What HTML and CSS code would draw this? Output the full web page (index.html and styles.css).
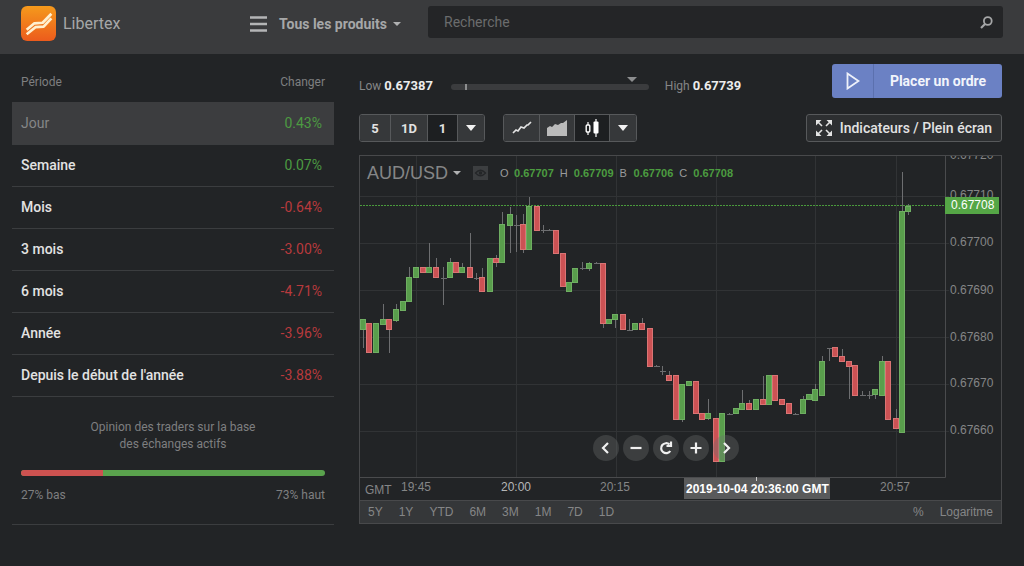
FILE: index.html
```html
<!DOCTYPE html>
<html lang="fr">
<head>
<meta charset="utf-8">
<meta name="viewport" content="width=device-width, initial-scale=1">
<title>Libertex</title>
<link rel="stylesheet" href="styles.css">
</head>
<body>
<header class="topbar">
  <a class="brand" href="#">
    <svg class="brand-logo" viewBox="0 0 34 34" aria-hidden="true">
      <defs><linearGradient id="lg" x1="0" y1="0" x2="0" y2="1"><stop offset="0" stop-color="#f59a1c"/><stop offset="1" stop-color="#ec5b1c"/></linearGradient></defs>
      <rect width="34" height="34" rx="6" fill="url(#lg)"/>
      <path d="M5.500 23 L13 16.800 L21 16.300 L29.500 7.500" fill="none" stroke="#fff0cf" stroke-width="2.600" stroke-linejoin="round"/>
      <path d="M5.500 27.500 L14 20.600 L22 20 L29.500 12" fill="none" stroke="#fff0cf" stroke-width="2.600" stroke-linejoin="round"/>
    </svg>
    <span>Libertex</span>
  </a>
  <button class="products" type="button">
    <svg class="burger" viewBox="0 0 17 16" aria-hidden="true"><path d="M0 1.500h17M0 8h17M0 14.500h17" stroke="#b4b5b6" stroke-width="2.400"/></svg>
    <span>Tous les produits</span>
    <span class="caret caret-small"></span>
  </button>
  <form class="search">
    <input class="search-input" type="search" placeholder="Recherche" aria-label="Recherche">
    <button class="search-button" type="button" aria-label="Rechercher">
      <svg viewBox="0 0 13 13" aria-hidden="true"><circle cx="7.800" cy="5" r="3.900" fill="none" stroke="#a5a6a7" stroke-width="1.800"/><path d="M5 8 1 12" stroke="#a5a6a7" stroke-width="2.200"/></svg>
    </button>
  </form>
</header>

<main class="layout">
  <section class="stats">
    <table class="periods">
      <thead><tr><th scope="col">Période</th><th scope="col">Changer</th></tr></thead>
      <tbody>
        <tr class="selected"><th scope="row">Jour</th><td class="up">0.43%</td></tr>
        <tr><th scope="row">Semaine</th><td class="up">0.07%</td></tr>
        <tr><th scope="row">Mois</th><td class="down">-0.64%</td></tr>
        <tr><th scope="row">3 mois</th><td class="down">-3.00%</td></tr>
        <tr><th scope="row">6 mois</th><td class="down">-4.71%</td></tr>
        <tr><th scope="row">Année</th><td class="down">-3.96%</td></tr>
        <tr><th scope="row">Depuis le début de l'année</th><td class="down">-3.88%</td></tr>
      </tbody>
    </table>
    <div class="opinion">
      <p class="opinion-title">Opinion des traders sur la base<br>des échanges actifs</p>
      <div class="opinion-bar"><div class="opinion-low" style="width:27%"></div></div>
      <div class="opinion-labels"><span>27% bas</span><span>73% haut</span></div>
    </div>
  </section>

  <section class="trading">
    <div class="order-row">
      <div class="extent">
        <span class="extent-label">Low <b>0.67387</b></span>
        <div class="extent-track"><i class="extent-open"></i><i class="extent-now caret"></i></div>
        <span class="extent-label">High <b>0.67739</b></span>
      </div>
      <button class="order" type="button">
        <span class="order-icon"><svg viewBox="0 0 14 18" aria-hidden="true"><path d="M1.500 1.500v15L12.500 9z" fill="none" stroke="#eef1fa" stroke-width="1.800"/></svg></span>
        <span class="order-text">Placer un ordre</span>
      </button>
    </div>

    <div class="tools">
      <div class="group">
        <button type="button" class="tool w-s">5</button>
        <button type="button" class="tool w-l">1D</button>
        <button type="button" class="tool w-s active">1</button>
        <button type="button" class="tool w-xs" aria-label="Intervalles"><span class="caret"></span></button>
      </div>
      <div class="group">
        <button type="button" class="tool w-m" aria-label="Ligne"><svg class="icon-line" viewBox="0 0 20 16" aria-hidden="true"><path d="M1 13l3-3 2 1 3-4 3 1 3-3 1 0 3-3" fill="none" stroke="#e2e2e2" stroke-width="1.700"/></svg></button>
        <button type="button" class="tool w-m" aria-label="Aire"><svg class="icon-line" viewBox="0 0 20 16" aria-hidden="true"><path d="M0 16V8l3-2 2 1 3-3 3 1 3-2 2 0 4-3V16z" fill="#bbb"/></svg></button>
        <button type="button" class="tool w-m active" aria-label="Chandeliers"><svg class="icon-candle" viewBox="0 0 14 18" aria-hidden="true"><path d="M3 3v3M3 13v3M11 0v18" stroke="#fff" stroke-width="1.200"/><rect x="1.200" y="6" width="3.600" height="7" rx="1" fill="none" stroke="#fff" stroke-width="1.400"/><rect x="8.500" y="2.500" width="5" height="12" rx="1" fill="#fff"/></svg></button>
        <button type="button" class="tool w-xs" aria-label="Types de graphique"><span class="caret"></span></button>
      </div>
      <button type="button" class="fullscreen">
        <svg viewBox="0 0 16 16" aria-hidden="true"><g fill="#e4e4e4" stroke="#e4e4e4" stroke-width="1.600"><path stroke="none" d="M0 0h5.500L0 5.500zM16 0v5.500L10.500 0zM0 16v-5.500L5.500 16zM16 16h-5.500L16 10.500z"/><path d="M2 2l4 4M14 2l-4 4M2 14l4-4M14 14l-4-4"/></g></svg>
        <span>Indicateurs / Plein écran</span>
      </button>
    </div>

    <div class="chart">
      <div class="plot">
        <svg id="plot" class="plot-svg" viewBox="360 156 641 344" role="img" aria-label="AUD/USD">
          <g id="grid" class="grid"></g>
          <path class="frame" d="M360 477.500H945.500V156"/>
          <g id="candles"></g>
          <path class="last" d="M360 205.500H945"/>
          <g class="axis">
            <text x="950" y="159">0.67720</text>
            <text x="950" y="199">0.67710</text>
            <text x="950" y="246">0.67700</text>
            <text x="950" y="294">0.67690</text>
            <text x="950" y="341">0.67680</text>
            <text x="950" y="387">0.67670</text>
            <text x="950" y="434">0.67660</text>
            <text x="365" y="494">GMT</text>
            <text x="401" y="491">19:45</text>
            <text x="501" y="491" class="strong">20:00</text>
            <text x="600" y="491">20:15</text>
            <text x="880" y="491">20:57</text>
          </g>
          <rect x="945" y="197" width="54" height="17" fill="#55a646"/>
          <text class="tag" x="951" y="209">0.67708</text>
          <rect x="684" y="478" width="146" height="21" fill="#595a5b"/>
          <path d="M756.500 477v4" stroke="#ccc"/>
          <text class="tag tag-time" x="686" y="493">2019-10-04 20:36:00 GMT</text>
        </svg>
        <div class="legend">
          <button type="button" class="symbol">AUD/USD <span class="caret caret-small"></span></button>
          <svg class="eye" viewBox="0 0 15 14" aria-hidden="true"><rect width="15" height="14" fill="#3c3e40"/><path d="M2.500 7Q7.500 1.500 12.500 7Q7.500 12.500 2.500 7z" fill="none" stroke="#242628" stroke-width="1.300"/><circle cx="7.500" cy="7" r="1.800" fill="#242628"/></svg>
          <dl class="ohlc">
            <div><dt>O</dt><dd>0.67707</dd></div>
            <div><dt>H</dt><dd>0.67709</dd></div>
            <div><dt>B</dt><dd>0.67706</dd></div>
            <div><dt>C</dt><dd>0.67708</dd></div>
          </dl>
        </div>
        <div class="nav">
          <button type="button" aria-label="Reculer"><svg viewBox="0 0 16 16"><path d="M10 3 5 8l5 5"/></svg></button>
          <button type="button" aria-label="Dézoomer"><svg viewBox="0 0 16 16"><path d="M2.500 8h11"/></svg></button>
          <button type="button" aria-label="Réinitialiser"><svg viewBox="0 0 16 16"><path d="M12.300 11A5 5 0 1 1 11.500 4.500M13 1.500V6H8.500"/></svg></button>
          <button type="button" aria-label="Zoomer"><svg viewBox="0 0 16 16"><path d="M2.500 8h11M8 2.500v11"/></svg></button>
          <button type="button" aria-label="Avancer"><svg viewBox="0 0 16 16"><path d="M6 3l5 5-5 5"/></svg></button>
        </div>
      </div>
      <div class="ranges">
        <button type="button">5Y</button><button type="button">1Y</button><button type="button">YTD</button><button type="button">6M</button><button type="button">3M</button><button type="button">1M</button><button type="button">7D</button><button type="button">1D</button>
        <button type="button" class="push">%</button><button type="button">Logaritme</button>
      </div>
    </div>
  </section>
</main>
<script src="chart.js"></script>
</body>
</html>
```
FILE: styles.css
```css
* { box-sizing: border-box; }

body {
  margin: 0;
  min-height: 100vh;
  background: #222426;
  color: #e2e2e2;
  font-family: Roboto, "Liberation Sans", sans-serif;
  font-size: 13px;
}

button {
  margin: 0;
  padding: 0;
  border: 0;
  background: none;
  color: inherit;
  font: inherit;
  cursor: pointer;
}

svg { display: block; }

.caret {
  display: inline-block;
  border: 5px solid transparent;
  border-top: 6px solid #f2f2f2;
  border-bottom: 0;
}

.caret-small {
  border-width: 4px 4px 0;
  border-top-color: #b0b1b2;
}

/* Top bar */
.topbar {
  display: grid;
  grid-template-columns: 229px 178px 1fr;
  align-items: start;
  height: 54px;
  padding: 6px 21px;
  background: #3a3b3d;
}

.brand {
  display: flex;
  align-items: center;
  gap: 7px;
  color: #a6a7a8;
  font-size: 16px;
  text-decoration: none;
}

.brand-logo { width: 35px; height: 35px; }

.products {
  display: flex;
  align-items: center;
  gap: 12px;
  height: 35px;
  color: #a6a7a8;
  font-size: 14px;
  font-weight: 700;
}

.products .caret { margin-left: -6px; }

.burger { width: 17px; height: 16px; }

.search {
  display: flex;
  align-items: center;
  height: 32px;
  padding: 0 10px 0 16px;
  border-radius: 3px;
  background: #242527;
}

.search-input {
  flex: 1;
  min-width: 0;
  padding: 0;
  border: 0;
  outline: 0;
  background: none;
  color: #ccc;
  font: inherit;
  font-size: 14px;
}

.search-input::placeholder { color: #6b6c6d; opacity: 1; }

.search-button svg { width: 13px; height: 13px; }

/* Page columns */
.layout {
  display: grid;
  grid-template-columns: 322fr 643fr;
  gap: 25px;
  align-items: start;
  padding: 10px 22px 0 12px;
}

/* Periods */
.periods {
  width: 100%;
  border-collapse: collapse;
  font-size: 14px;
}

.periods th { text-align: left; padding: 0 0 0 9px; }
.periods td, .periods th:last-child { text-align: right; padding: 0 12px 0 0; }

.periods thead th {
  height: 38px;
  padding-bottom: 3px;
  color: #7e7f80;
  font-size: 12px;
  font-weight: 400;
}

.periods thead th:last-child { padding: 0 9px 3px 0; }

.periods tbody tr { height: 42px; border-bottom: 1px solid #3b3d3f; }
.periods tbody th { font-weight: 500; }
.periods .selected { background: #3c3d3f; }
.periods .selected th { color: #858687; font-weight: 400; }
.periods .up { color: #4c9a42; }
.periods .down { color: #b83a3d; }

.opinion {
  padding: 22px 9px 21px;
  border-bottom: 1px solid #3b3d3f;
  color: #7e7f80;
  font-size: 12px;
}

.opinion-title { margin: 0 0 17px; line-height: 17px; text-align: center; }
.opinion-bar { height: 6px; border-radius: 3px; overflow: hidden; background: #5aa34d; }
.opinion-low { height: 100%; background: #cd5250; }

.opinion-labels {
  display: flex;
  justify-content: space-between;
  margin-top: 11px;
  line-height: 16px;
}

/* Order row */
.order-row {
  display: flex;
  justify-content: space-between;
  height: 34px;
}

.extent {
  display: flex;
  align-items: flex-end;
  padding-bottom: 4px;
}

.extent-label { color: #858687; font-size: 12px; line-height: 16px; }
.extent-label b { color: #ececec; font-size: 13px; }

.extent-track {
  position: relative;
  width: 198px;
  height: 6px;
  margin: 0 16px 4px 18px;
  border-radius: 3px;
  background: #3b3c3e;
}

.extent-open { position: absolute; left: 7%; top: 0; width: 2px; height: 6px; background: #8d8e8f; }
.extent-now { position: absolute; left: 89%; top: -7px; border-top-color: #8d8e8f; border-top-width: 5px; }

.order {
  display: flex;
  width: 170px;
  border-radius: 3px;
  background: #6b81c4;
  color: #f2f4fb;
  font-size: 14px;
  font-weight: 700;
}

.order-icon {
  display: grid;
  place-items: center;
  width: 42px;
  height: 100%;
  border-right: 1px solid #5b70ae;
}

.order-icon svg { width: 14px; height: 18px; }
.order-text { flex: 1; align-self: center; }

/* Tools */
.tools {
  display: flex;
  gap: 18px;
  margin: 16px 0 13px;
}

.group {
  display: flex;
  height: 28px;
  border: 1px solid #57595b;
  border-radius: 3px;
  overflow: hidden;
}

.tool {
  display: grid;
  place-items: center;
  background: #36383a;
  font-weight: 700;
}

.tool + .tool { border-left: 1px solid #57595b; }
.tool.active { background: #1d1f21; }
.w-xs { width: 27px; }
.w-s { width: 30px; }
.w-m { width: 35px; }
.w-l { width: 37px; }
.icon-line { width: 20px; height: 16px; }
.icon-candle { width: 14px; height: 18px; }

.fullscreen {
  display: flex;
  align-items: center;
  gap: 8px;
  height: 28px;
  margin-left: auto;
  padding: 0 9px;
  border: 1px solid #57595b;
  border-radius: 3px;
  background: #2d2f31;
  font-size: 14px;
  font-weight: 500;
}

.fullscreen svg { width: 16px; height: 16px; }

/* Chart */
.chart {
  border: 1px solid #48494b;
  color: #858687;
  font-family: "Liberation Sans", Arial, sans-serif;
}

.plot { position: relative; }
.plot-svg { width: 100%; height: auto; }
.grid { stroke: #313335; stroke-width: 1; }
.frame { fill: none; stroke: #4a4b4d; }
.last { fill: none; stroke: #4a9a3c; stroke-dasharray: 2 1; }
.axis { fill: #858687; font-size: 12px; }
.strong { fill: #b5b6b7; }
.tag { fill: #fff; font-size: 12px; }
.tag-time { font-weight: 700; }
.wick { stroke: #6d6e70; }
.rise { fill: #599e4c; stroke: #6fae62; }
.fall { fill: #cc5254; stroke: #da7474; }

.legend {
  position: absolute;
  top: 5px;
  left: 7px;
  display: flex;
  align-items: center;
  height: 24px;
}

.symbol {
  display: flex;
  align-items: center;
  gap: 5px;
  color: #858687;
  font-size: 18px;
}

.eye { width: 15px; height: 14px; margin: 0 12px; }
.ohlc { display: flex; gap: 6px; margin: 0; font-size: 11px; }
.ohlc div { display: flex; gap: 5px; }
.ohlc dt { width: 9px; color: #9a9b9c; }
.ohlc dd { margin: 0; color: #4c9c40; font-weight: 700; }

.nav {
  position: absolute;
  left: 36.400%;
  bottom: 39px;
  display: flex;
  gap: 4px;
}

.nav button {
  display: grid;
  place-items: center;
  width: 26px;
  height: 26px;
  border-radius: 50%;
  background: rgba(110, 111, 113, 0.35);
}

.nav svg { width: 16px; height: 16px; fill: none; stroke: #f0f0f0; stroke-width: 2.200; }

.ranges {
  display: flex;
  gap: 16px;
  height: 23px;
  padding: 0 8px;
  border-top: 1px solid #48494b;
  background: #353739;
  font-size: 12px;
}

.push { margin-left: auto; }
```
FILE: chart.js
```js
// [x, body top, body bottom, kind, wick top, wick bottom]; kind: g rise, r fall, d unchanged
const candles = [
  [363,319,330,"g",319,348],[369,323,353,"r"],[376,323,353,"g"],[383,319,325,"g",304,325],
  [389,319,330,"r",319,353],[396,309,321,"g",304,322],[403,301,311,"g"],[409,277,302,"g",267,302],
  [416,267,278,"g"],[423,267,273,"r"],[429,267,273,"g",243,273],[436,267,278,"r",258,278],
  [443,278,278,"d",267,305],[450,262,278,"g",258,278],[456,262,273,"r"],[462,267,273,"g",263,273],
  [470,267,278,"r",233,278],[476,278,278,"d",273,280],[482,277,292,"r",268,292],[490,258,292,"g"],
  [496,258,263,"r",255,267],[502,224,263,"g",212,263],[510,214,226,"g",207,253],[516,225,225,"d",215,252],
  [523,224,250,"r",214,253],[529,206,250,"g",197,250],[537,206,231,"r"],[543,230,230,"d",225,233],
  [549,230,230,"d",229,231],[556,230,254,"r"],[563,253,287,"r"],[569,282,292,"g"],
  [575,268,283,"g"],[582,268,268,"d",262,270],[589,263,269,"g",262,271],[596,263,263,"d",262,264],
  [603,263,324,"r",263,328],[609,319,324,"g"],[615,314,320,"g",314,328],[623,314,330,"r"],
  [629,330,330,"d",319,330],[635,323,330,"g"],[642,323,330,"r",318,330],[650,328,367,"r"],
  [656,366,366,"d",365,367],[662,371,371,"d",366,375],[669,375,381,"r",371,381],[676,375,420,"r"],
  [682,384,420,"g",384,422],[689,381,386,"g"],[696,381,414,"r"],[702,413,420,"r"],
  [708,413,419,"g",399,420],[716,418,462,"r"],[722,413,462,"g"],[729,414,414,"d",413,415],
  [736,408,414,"g"],[742,403,410,"g",390,410],[749,403,410,"r",400,410],[756,399,410,"g"],
  [763,399,405,"r",376,405],[769,375,405,"g"],[775,375,401,"r"],[782,399,405,"r"],
  [789,403,414,"r"],[795,414,414,"d",413,415],[803,399,414,"g",396,414],[809,394,400,"g"],
  [815,389,401,"g",384,401],[822,361,396,"g",356,396],[829,348,348,"d",348,361],[835,347,357,"r"],
  [842,356,362,"r",349,362],[849,361,367,"r",361,399],[855,365,396,"r"],[862,395,395,"d",391,396],
  [869,395,395,"d",391,399],[875,389,395,"g",389,399],[882,361,396,"g",356,396],[888,361,420,"r"],
  [896,418,429,"r",409,429],[902,211,433,"g",172,433],[908,206,212,"g",204,215]
];

const SVG = "http://www.w3.org/2000/svg";

function add(parent, tag, attrs) {
  const node = document.createElementNS(SVG, tag);
  for (const key in attrs) node.setAttribute(key, attrs[key]);
  parent.appendChild(node);
}

const grid = document.getElementById("grid");
for (const x of [416, 516, 616, 716, 815, 896]) {
  add(grid, "path", { d: `M${x}.5 156V477` });
}
for (const y of [196, 243, 290, 337, 384, 431]) {
  add(grid, "path", { d: `M360 ${y}.5H949` });
}

const layer = document.getElementById("candles");
for (const [x, top, bottom, kind, high, low] of candles) {
  if (high !== undefined) add(layer, "path", { class: "wick", d: `M${x}.5 ${high}V${low}` });
  if (kind === "d") {
    add(layer, "path", { class: "wick", d: `M${x - 2} ${top}.5h6` });
  } else {
    add(layer, "rect", {
      class: kind === "g" ? "rise" : "fall",
      x: x - 2.5, y: top + 0.5, width: 5, height: bottom - top - 1
    });
  }
}
```
